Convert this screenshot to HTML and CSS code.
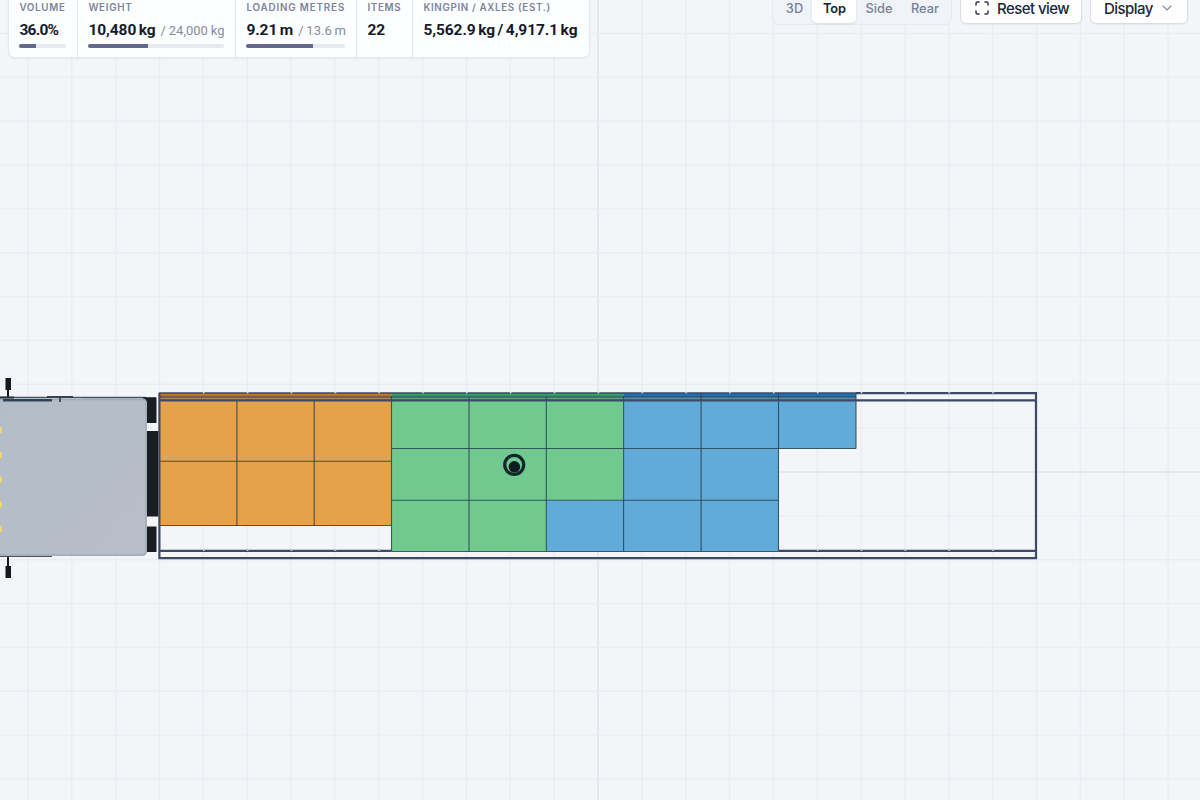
FILE: index.html
```html
<!DOCTYPE html>
<html lang="en">
<head>
<meta charset="utf-8">
<title>Load planner</title>
<link rel="stylesheet" href="styles.css">
</head>
<body>
<main class="stage">
  <svg class="scene" viewBox="0 0 1200 800" width="1200" height="800" aria-hidden="true">
    <defs>
      <pattern id="ticks" x="203" y="0" width="43.85" height="800" patternUnits="userSpaceOnUse"><rect width="1.400" height="800" fill="#dfe7ed"/></pattern>
      <linearGradient id="cab" x1="0" y1="0" x2="1" y2="1"><stop offset="0" stop-color="#b4bdc7"/><stop offset="1" stop-color="#b8bec9"/></linearGradient>
    </defs>
    <g id="grid" class="grid"></g>
    <g class="cab">
      <path d="M5.500 378h5.500v12h-2v8h-2v-8h-1.500zM7 557h2v9h2v12H5.500v-12H7z" fill="#15191f"/>
      <path d="M0 397.500h146M82 397.800h74M0 556.300h52" stroke="#465260" stroke-width="1.300"/>
      <rect x="143" y="397.500" width="13.500" height="25.500" fill="#1a1d22"/>
      <rect x="146" y="431" width="12.500" height="85.500" fill="#1a1d22"/>
      <rect x="146" y="526.500" width="10.500" height="25.500" fill="#1a1d22"/>
      <path d="M0 398.500h142q5 0 5 5V551q0 5-5 5H0z" fill="url(#cab)"/>
      <path d="M0 399.500h141.500q4.500 0 4.500 4.500V550.500q0 4.500-4.500 4.500H0" fill="none" stroke="#a3abb6" stroke-width="1.500"/>
      <path d="M3 400.300H52" stroke="#2f4259" stroke-width="2.400"/>
      <path d="M0 397.500h14" stroke="#29313c" stroke-width="2"/>
      <path d="M47 396.800h26M60 397v5" stroke="#354150" stroke-width="1.700"/>
      <path d="M0 427h1.500q1 3 0 6H0zM0 452h1.500q1 3 0 6H0zM0 476.500h1.500q1 3 0 6H0zM0 501.500h1.500q1 3 0 6H0zM0 526h1.500q1 3 0 6H0z" fill="#f4d66f"/>
    </g>
    <g class="cargo">
      <path fill="#e5a24a" d="M160 393h231.500v132.500H160z"/>
      <path fill="#71c990" d="M391.500 393h232v107.500h-77.300v51H391.500z"/>
      <path fill="#62abd9" d="M623.500 393H856v55.500h-77.500v103H546.200v-51h77.300z"/>
      <path fill="#c96f1f" d="M160 393h231.500v4H160z"/>
      <path fill="#2f9f60" d="M391.500 393h232v4h-232z"/>
      <path fill="#1d72b4" d="M623.500 393H856v4H623.500z"/>
      <path fill="#56616d" fill-opacity=".4" d="M160 397h696v3H160z"/>
    </g>
    <g class="edges">
      <path d="M160 461.200h231.500M160 525.500h231.500M391.500 448.500H856M391.500 500.300h387M391.500 551.500h387"/>
      <path d="M236.900 400v125.500M314.200 400v125.500M391.500 396v155.500M469 397v154.500M546.300 397v154.500M623.600 396v155.500M701.100 393v158.500M778.500 393v158.500M856 393v55.500"/>
    </g>
    <g class="frame">
      <path d="M856 393.200H1036V558.200H159.400V393" stroke-width="2.200"/>
      <path d="M159 393h697" stroke-width="1.500"/>
      <path d="M159 400.300h877M160 550.900h231.500M778.500 550.900H1036" stroke-width="2.200"/>
      <path d="M160 397h696" stroke="#344252" stroke-width="1"/>
    </g>
    <path fill="url(#ticks)" d="M200 392h800v1.400H200zM200 550h190v1H200zM780 550h220v1H780z"/>
    <circle cx="514.200" cy="464.800" r="9.500" fill="none" stroke="#10282b" stroke-width="3.200"/>
    <circle cx="514.400" cy="466.800" r="5.800" fill="#0e1b20"/>
  </svg>

  <div class="overlay">
    <section class="stats">
      <div class="stat volume">
        <span class="label">VOLUME</span>
        <span class="value"><b>36.0%</b></span>
        <span class="meter"><i style="width:36%"></i></span>
      </div>
      <div class="stat weight">
        <span class="label">WEIGHT</span>
        <span class="value"><b>10,480 kg</b><em>/ 24,000 kg</em></span>
        <span class="meter"><i style="width:43.700%"></i></span>
      </div>
      <div class="stat metres">
        <span class="label">LOADING METRES</span>
        <span class="value"><b>9.21 m</b><em>/ 13.6 m</em></span>
        <span class="meter"><i style="width:67.700%"></i></span>
      </div>
      <div class="stat items">
        <span class="label">ITEMS</span>
        <span class="value"><b>22</b></span>
      </div>
      <div class="stat axles">
        <span class="label">KINGPIN / AXLES (EST.)</span>
        <span class="value"><b>5,562.9 kg / 4,917.1 kg</b></span>
      </div>
    </section>
    <nav class="tools">
      <div class="views">
        <button class="view v3d">3D</button><button class="view top active">Top</button><button class="view side">Side</button><button class="view rear">Rear</button>
      </div>
      <button class="action reset">
        <svg width="14" height="14" viewBox="0 0 14 14"><path d="M1 4.500V2.500Q1 1 2.500 1H4.500M9.500 1h2Q13 1 13 2.500v2M13 9.500v2q0 1.500-1.500 1.500h-2M4.500 13h-2Q1 13 1 11.500v-2"/></svg>
        <span>Reset view</span>
      </button>
      <button class="action display">
        <span>Display</span>
        <svg class="chevron" width="10" height="6" viewBox="0 0 10 6"><path d="M.7.700 5 5 9.300.700"/></svg>
      </button>
    </nav>
  </div>
</main>
<script src="grid.js"></script>
</body>
</html>
```

FILE: styles.css
```css
* { box-sizing: border-box; }
body { margin: 0; font-family: Inter, "Liberation Sans", sans-serif; background: #f3f5f9; color: #161b2c; }
.stage { position: relative; width: 1200px; height: 800px; overflow: hidden; }
.scene { position: absolute; inset: 0; }
.grid line { stroke: #eaedf1; stroke-width: 1.4; }
.grid .axis { stroke: #e0e4e8; stroke-width: 1.6; }
.edges { fill: none; stroke: #234352; stroke-opacity: .85; stroke-width: 1.1; }
.frame { fill: none; stroke: #3b4a68; }
.overlay { position: relative; display: flex; justify-content: space-between; align-items: flex-start; margin-top: -10px; padding: 0 12px 0 8px; }

.stats { display: flex; width: 582px; height: 67.5px; background: #fdfeff; border: 1px solid #e4e7ec; border-radius: 0 0 7px 7px; box-shadow: 0 1px 2px #1720330d; }
.stat { display: flex; flex-direction: column; padding: 11px 0 0 10.4px; border-right: 1px solid #e4e7ec; white-space: nowrap; }
.stat:last-child { border-right: 0; }
.volume { width: 69px; padding-right: 10.6px; }
.weight { width: 158px; padding-right: 11px; }
.metres { width: 121px; padding-right: 11px; }
.items { width: 56px; }
.axles { flex: 1; }
.label { height: 12px; font-size: 9.8px; line-height: 12px; font-weight: 600; letter-spacing: .7px; color: #7b8499; }
.metres .label { letter-spacing: .86px; }
.axles .label { letter-spacing: .66px; }
.value { display: flex; align-items: baseline; gap: 5px; height: 20px; margin-top: 6px; font-family: Roboto, "Liberation Sans", sans-serif; font-size: 15.5px; line-height: 20px; }
.value b { font-weight: 700; letter-spacing: -.08px; word-spacing: -1.2px; }
.volume b { letter-spacing: -.75px; }
.value em { font-size: 13px; font-style: normal; color: #858c9d; letter-spacing: 0; word-spacing: -.4px; }
.meter { height: 4px; margin-top: 4px; border-radius: 2px; background: #e6e9ed; overflow: hidden; }
.meter i { display: block; height: 4px; background: #626b89; }

.tools { display: flex; align-items: flex-start; }
.tools button { font-family: inherit; padding: 0; white-space: nowrap; }
.views { display: flex; width: 180px; height: 35px; padding: 0 3px 2px; margin-right: 8px; background: #f0f3f7; border: 1px solid #e7ebf0; border-radius: 0 0 7px 7px; }
.tools .view { height: 32px; padding: 3px 0 0 1px; border: 0; background: none; color: #788297; font-size: 12.8px; font-weight: 500; line-height: 16px; }
.view.v3d { width: 36px; }
.view.top { width: 44px; }
.view.side { width: 45px; }
.view.rear { flex: 1; }
.tools .view.active { background: #fff; color: #181d2c; font-weight: 600; border-radius: 0 0 5px 5px; box-shadow: 0 1px 3px #1620301a; }
.action { display: flex; align-items: center; height: 34px; border: 1px solid #d8dce3; border-radius: 0 0 6px 6px; background: #fefeff; color: #20263a; font-size: 15px; font-weight: 500; line-height: 15px; box-shadow: 0 1px 1px #1620300a; }
.action span { padding-top: 2px; letter-spacing: -.55px; }
.action svg { fill: none; stroke: #30374a; stroke-width: 1.5; margin-top: 1px; }
.tools .reset { width: 122px; padding-left: 14px; gap: 8px; margin-right: 8px; }
.tools .display { width: 98px; padding-left: 13px; gap: 9px; }
.action .chevron { stroke: #7c8496; stroke-width: 1.2; }
```

FILE: grid.js
```js
const grid = document.getElementById("grid");
const step = 43.85;
function addLine(x1, y1, x2, y2, axis) {
  const line = document.createElementNS("http://www.w3.org/2000/svg", "line");
  Object.entries({ x1, y1, x2, y2 }).forEach(([k, v]) => line.setAttribute(k, v));
  if (axis) line.setAttribute("class", "axis");
  grid.appendChild(line);
}
for (let i = -13; i <= 13; i++) addLine(598 + i * step, 0, 598 + i * step, 800, i === 0);
for (let i = -10; i <= 7; i++) addLine(0, 472 + i * step, 1200, 472 + i * step, i === 0);
```
